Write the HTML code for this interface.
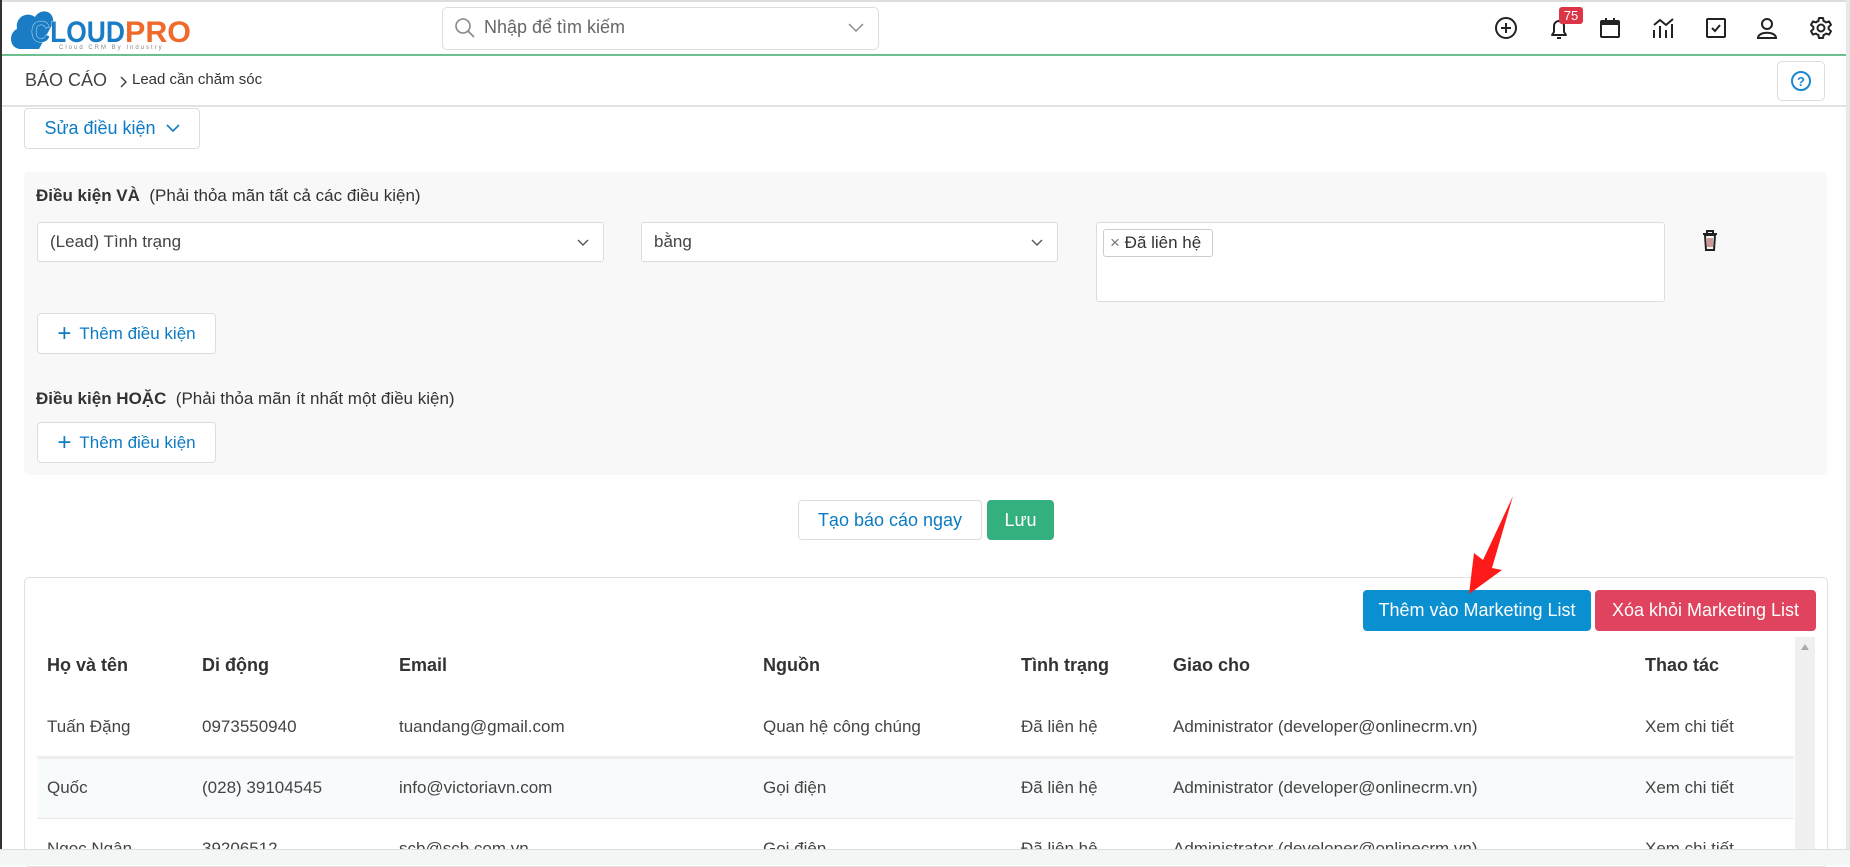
<!DOCTYPE html>
<html><head><meta charset="utf-8"><style>
*{box-sizing:border-box;margin:0;padding:0}
body{width:1850px;height:865px;overflow:hidden;background:#fff;font-family:"Liberation Sans",sans-serif;color:#333;position:relative;font-size:17px}
.a{position:absolute}
.btn{position:absolute;border:1px solid #ddd;border-radius:4px;background:#fff;color:#0d7bc4;display:flex;align-items:center;justify-content:center;font-size:17px}
.sel{position:absolute;border:1px solid #ddd;border-radius:3px;background:#fff;padding-left:12px;display:flex;align-items:center;font-size:17px;color:#444}
.th{position:absolute;top:655px;font-weight:bold;font-size:18px;color:#333}
.td{position:absolute;font-size:17px;color:#444}
</style></head><body>
<div class="a" style="left:0;top:0;width:1850px;height:2px;background:#ddd"></div>
<div class="a" style="left:0;top:0;width:2px;height:850px;background:#333"></div>
<div class="a" style="left:1846px;top:0;width:4px;height:850px;background:#e8e8e8"></div>
<!-- logo -->
<svg class="a" style="left:9px;top:5px" width="190" height="46" viewBox="0 0 190 46">
<path d="M12 44 C0 44 -1 28 8 24 C6 12 18 6 26 12 C32 2 46 6 44 18 L30 44 Z" fill="#1a7cc4"/>
<text x="22" y="37" font-family="Liberation Sans" font-weight="bold" font-size="30" fill="#1a7cc4" textLength="94" lengthAdjust="spacingAndGlyphs" stroke="#fff" stroke-width="0.8" paint-order="stroke">CLOUD</text>
<text x="116" y="37" font-family="Liberation Sans" font-weight="bold" font-size="30" fill="#ef6a2b" textLength="66" lengthAdjust="spacingAndGlyphs">PRO</text>
<text x="50" y="44" font-family="Liberation Sans" font-size="6" fill="#888" letter-spacing="2">Cloud CRM By Industry</text>
</svg>
<!-- search -->
<div class="a" style="left:442px;top:7px;width:437px;height:43px;border:1px solid #ddd;border-radius:5px"></div>
<svg class="a" style="left:454px;top:17px" width="22" height="22" viewBox="0 0 22 22"><circle cx="9" cy="9" r="7" fill="none" stroke="#888" stroke-width="1.6"/><path d="M14 14 L20 20" stroke="#888" stroke-width="1.6"/></svg>
<div class="a" style="left:484px;top:17px;font-size:18px;color:#666">Nhập để tìm kiếm</div>
<svg class="a" style="left:848px;top:23px" width="16" height="10"><path d="M1 1 L8 8 L15 1" fill="none" stroke="#888" stroke-width="1.4"/></svg>
<!-- icons -->
<svg class="a" style="left:1494px;top:16px" width="24" height="24"><circle cx="12" cy="12" r="10" fill="none" stroke="#222" stroke-width="2"/><path d="M12 7V17M7 12H17" stroke="#222" stroke-width="2"/></svg>
<svg class="a" style="left:1547px;top:16px" width="24" height="26"><path d="M5 19 L7 16 V10 A5 5 0 0 1 17 10 V16 L19 19 Z" fill="none" stroke="#222" stroke-width="2" stroke-linejoin="round"/><path d="M10 22 H14" stroke="#222" stroke-width="2"/></svg>
<div class="a" style="left:1559px;top:7px;width:24px;height:17px;background:#dc3545;color:#fff;border-radius:3px;font-size:13px;text-align:center;line-height:17px">75</div>
<svg class="a" style="left:1598px;top:16px" width="24" height="24"><rect x="3" y="5" width="18" height="16" rx="1" fill="none" stroke="#222" stroke-width="2"/><rect x="3" y="5" width="18" height="4" fill="#222"/><path d="M8 2V6M16 2V6" stroke="#222" stroke-width="2"/></svg>
<svg class="a" style="left:1651px;top:16px" width="26" height="24"><path d="M3 22V14M9 22V10M15 22V14M21 22V8" stroke="#222" stroke-width="2"/><path d="M3 9 L9 4 L15 9 L22 3" fill="none" stroke="#222" stroke-width="2"/></svg>
<svg class="a" style="left:1704px;top:16px" width="24" height="24"><rect x="3" y="3" width="18" height="18" rx="1" fill="none" stroke="#222" stroke-width="2"/><path d="M8 12 L11 15 L16 9" fill="none" stroke="#222" stroke-width="2"/></svg>
<svg class="a" style="left:1755px;top:16px" width="24" height="24"><circle cx="12" cy="8" r="5" fill="none" stroke="#222" stroke-width="2"/><path d="M3 22 C3 15 21 15 21 22 Z" fill="none" stroke="#222" stroke-width="2"/></svg>
<svg class="a" style="left:1809px;top:16px" width="24" height="24" viewBox="0 0 24 24"><path d="M10 2H14L14.6 5A7.5 7.5 0 0 1 17 6.4L20 5.4 22 8.8 19.6 11A7.5 7.5 0 0 1 19.6 13L22 15.2 20 18.6 17 17.6A7.5 7.5 0 0 1 14.6 19L14 22H10L9.4 19A7.5 7.5 0 0 1 7 17.6L4 18.6 2 15.2 4.4 13A7.5 7.5 0 0 1 4.4 11L2 8.8 4 5.4 7 6.4A7.5 7.5 0 0 1 9.4 5Z" fill="none" stroke="#222" stroke-width="2" stroke-linejoin="round"/><circle cx="12" cy="12" r="3.5" fill="none" stroke="#222" stroke-width="2"/></svg>
<div class="a" style="left:2px;top:54px;width:1844px;height:2px;background:#6cbf8e"></div>
<!-- breadcrumb -->
<div class="a" style="left:25px;top:70px;font-size:18px;color:#444">BÁO CÁO</div>
<svg class="a" style="left:120px;top:76px" width="8" height="12"><path d="M1 1L6 6L1 11" fill="none" stroke="#333" stroke-width="1.3"/></svg>
<div class="a" style="left:132px;top:71px;font-size:15px;color:#333">Lead cần chăm sóc</div>
<div class="a" style="left:1777px;top:61px;width:48px;height:40px;border:1px solid #ddd;border-radius:5px"></div>
<svg class="a" style="left:1790px;top:70px" width="22" height="22"><circle cx="11" cy="11" r="9" fill="none" stroke="#1a88d0" stroke-width="2"/><text x="11" y="16" text-anchor="middle" font-family="Liberation Sans" font-weight="bold" font-size="13" fill="#1a88d0">?</text></svg>
<div class="a" style="left:2px;top:105px;width:1844px;height:2px;background:#e2e2e2"></div>
<div class="btn" style="left:24px;top:108px;width:176px;height:41px;font-size:18px">Sửa điều kiện <svg style="margin-left:10px" width="14" height="9"><path d="M1 1L7 7L13 1" fill="none" stroke="#0d7bc4" stroke-width="1.6"/></svg></div>
<!-- panel -->
<div class="a" style="left:24px;top:172px;width:1803px;height:303px;background:#f8f8f8;border-radius:5px"></div>
<div class="a" style="left:36px;top:186px;font-size:17px"><b>Điều kiện VÀ</b>&nbsp; (Phải thỏa mãn tất cả các điều kiện)</div>
<div class="sel" style="left:37px;top:222px;width:567px;height:40px">(Lead) Tình trạng<svg class="a" style="right:14px;top:16px" width="12" height="8"><path d="M1 1L6 6L11 1" fill="none" stroke="#555" stroke-width="1.4"/></svg></div>
<div class="sel" style="left:641px;top:222px;width:417px;height:40px">bằng<svg class="a" style="right:14px;top:16px" width="12" height="8"><path d="M1 1L6 6L11 1" fill="none" stroke="#555" stroke-width="1.4"/></svg></div>
<div class="a" style="left:1096px;top:222px;width:569px;height:80px;border:1px solid #ddd;border-radius:3px;background:#fff"></div>
<div class="a" style="left:1103px;top:229px;width:110px;height:28px;border:1px solid #ccc;border-radius:3px;background:#fff;font-size:17px;color:#333;padding:3px 0 0 6px"><span style="color:#777">×</span> Đã liên hệ</div>
<svg class="a" style="left:1701px;top:229px" width="18" height="22"><path d="M2 5H16M6 5V2H12V5" fill="none" stroke="#222" stroke-width="2"/><path d="M4 6H14L13 21H5Z" fill="none" stroke="#222" stroke-width="2"/><path d="M7 9V18M9 9V18M11 9V18" stroke="#a33" stroke-width="1"/></svg>
<div class="btn" style="left:37px;top:313px;width:179px;height:41px"><span style="font-size:24px;margin-right:8px;font-weight:300">+</span>Thêm điều kiện</div>
<div class="a" style="left:36px;top:389px;font-size:17px"><b>Điều kiện HOẶC</b>&nbsp; (Phải thỏa mãn ít nhất một điều kiện)</div>
<div class="btn" style="left:37px;top:422px;width:179px;height:41px"><span style="font-size:24px;margin-right:8px;font-weight:300">+</span>Thêm điều kiện</div>
<!-- action -->
<div class="btn" style="left:798px;top:500px;width:184px;height:40px;font-size:18px">Tạo báo cáo ngay</div>
<div class="btn" style="left:987px;top:500px;width:67px;height:40px;background:#34b07f;border-color:#34b07f;color:#fff;font-size:18px">Lưu</div>
<!-- table card -->
<div class="a" style="left:24px;top:577px;width:1804px;height:290px;border:1px solid #e0e0e0;border-radius:5px"></div>
<div class="btn" style="left:1363px;top:590px;width:228px;height:41px;background:#0a8fd0;border-color:#0a8fd0;color:#fff;font-size:18px">Thêm vào Marketing List</div>
<div class="btn" style="left:1595px;top:590px;width:221px;height:41px;background:#e0435e;border-color:#e0435e;color:#fff;font-size:18px">Xóa khỏi Marketing List</div>
<div class="a" style="left:1795px;top:637px;width:20px;height:212px;background:#f0f0f0"></div>
<svg class="a" style="left:1800px;top:643px" width="10" height="8"><path d="M1 7L5 1L9 7Z" fill="#aaa"/></svg>
<div class="th" style="left:47px">Họ và tên</div><div class="th" style="left:202px">Di động</div><div class="th" style="left:399px">Email</div><div class="th" style="left:763px">Nguồn</div><div class="th" style="left:1021px">Tình trạng</div><div class="th" style="left:1173px">Giao cho</div><div class="th" style="left:1645px">Thao tác</div>
<div class="a" style="left:37px;top:756px;width:1757px;height:3px;background:#eee"></div>
<div class="a" style="left:37px;top:759px;width:1757px;height:59px;background:#f8fbfc"></div>
<div class="a" style="left:37px;top:818px;width:1757px;height:1px;background:#eaeaea"></div>
<div class="td" style="left:47px;top:717px">Tuấn Đặng</div><div class="td" style="left:202px;top:717px">0973550940</div><div class="td" style="left:399px;top:717px">tuandang@gmail.com</div><div class="td" style="left:763px;top:717px">Quan hệ công chúng</div><div class="td" style="left:1021px;top:717px">Đã liên hệ</div><div class="td" style="left:1173px;top:717px">Administrator (developer@onlinecrm.vn)</div><div class="td" style="left:1645px;top:717px">Xem chi tiết</div>
<div class="td" style="left:47px;top:778px">Quốc</div><div class="td" style="left:202px;top:778px">(028) 39104545</div><div class="td" style="left:399px;top:778px">info@victoriavn.com</div><div class="td" style="left:763px;top:778px">Gọi điện</div><div class="td" style="left:1021px;top:778px">Đã liên hệ</div><div class="td" style="left:1173px;top:778px">Administrator (developer@onlinecrm.vn)</div><div class="td" style="left:1645px;top:778px">Xem chi tiết</div>
<div class="td" style="left:47px;top:839px">Ngọc Ngân</div><div class="td" style="left:202px;top:839px">39206512</div><div class="td" style="left:399px;top:839px">scb@scb.com.vn</div><div class="td" style="left:763px;top:839px">Gọi điện</div><div class="td" style="left:1021px;top:839px">Đã liên hệ</div><div class="td" style="left:1173px;top:839px">Administrator (developer@onlinecrm.vn)</div><div class="td" style="left:1645px;top:839px">Xem chi tiết</div>
<div class="a" style="left:0;top:849px;width:1850px;height:16px;background:#f4f5f5;border-top:1px solid #ddd"></div>
<!-- arrow -->
<svg class="a" style="left:1460px;top:490px" width="70" height="110"><path d="M53 6 L32 78 L42 80 L9 104 L14 63 L23 70 Z" fill="#ff1a1a"/></svg>
</body></html>
